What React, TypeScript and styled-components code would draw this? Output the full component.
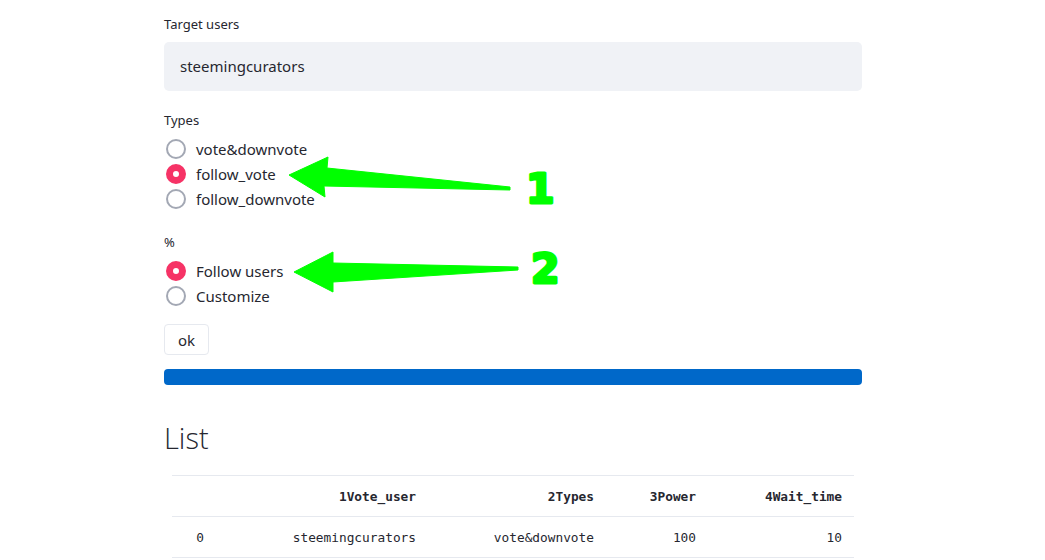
import React from "react";
import styled, { createGlobalStyle } from "styled-components";

const GlobalStyle = createGlobalStyle`
  body {
    margin: 0;
    background: #ffffff;
    font-family: "Noto Sans", "Open Sans", sans-serif;
    color: #262730;
  }
`;

const Page = styled.div`
  position: relative;
  width: 1045px;
  height: 560px;
  overflow: hidden;
`;

const Main = styled.div`
  display: flex;
  flex-direction: column;
  width: 698px;
  margin-left: 164px;
  padding-top: 14px;
`;

const Label = styled.div<{ $top?: number }>`
  font-size: 13px;
  line-height: 20px;
  height: 20px;
  margin-top: ${p => p.$top ?? 0}px;
  margin-bottom: 8px;
`;

const TextInput = styled.div`
  height: 49px;
  background: #f0f2f6;
  border-radius: 5px;
  display: flex;
  align-items: center;
  padding-left: 16px;
  padding-bottom: 2px;
  box-sizing: border-box;
  font-size: 15px;
`;

const RadioGroup = styled.div`
  display: flex;
  flex-direction: column;
  margin-top: -2px;
`;

const RadioRow = styled.label`
  display: flex;
  align-items: center;
  height: 25px;
  padding-left: 2px;
  gap: 10px;
  font-size: 15px;
`;

const RadioCircle = styled.span<{ $on?: boolean }>`
  box-sizing: border-box;
  width: 20px;
  height: 20px;
  border-radius: 50%;
  border: ${p => (p.$on ? "7px solid #f63366" : "2px solid #a3a8b4")};
  background: #ffffff;
`;

const Button = styled.button`
  align-self: flex-start;
  margin-top: 16px;
  height: 31px;
  width: 45px;
  border: 1px solid #e6e9ef;
  border-radius: 4px;
  background: #ffffff;
  font-family: "Noto Sans", "Open Sans", sans-serif;
  font-size: 15px;
  color: #262730;
  padding: 0;
`;

const Progress = styled.div`
  margin-top: 14px;
  height: 16px;
  border-radius: 4px;
  background: #0068c9;
`;

const Heading = styled.h2`
  margin: 33px 0 0 0;
  font-size: 29px;
  line-height: 40px;
  font-weight: 300;
  font-family: "Open Sans", "Noto Sans", sans-serif;
`;

const Table = styled.table`
  margin: 17px 8px 0 8px;
  width: 682px;
  border-collapse: collapse;
  font-family: "DejaVu Sans Mono", "Liberation Mono", monospace;
  font-size: 12.8px;
  color: #262730;

  th, td {
    border-top: 1px solid #e6e9ef;
    border-bottom: 1px solid #e6e9ef;
    height: 40px;
    padding: 0 12px;
    text-align: right;
  }

  th {
    font-weight: bold;
  }

  td.idx {
    text-align: center;
  }
`;

const Overlay = styled.svg`
  position: absolute;
  top: 0;
  left: 0;
`;

const Num = styled.text`
  font-family: "DejaVu Sans", sans-serif;
  font-weight: 900;
  font-size: 41px;
  fill: #00ff00;
  stroke: #00ff00;
  stroke-width: 3px;
  stroke-linejoin: round;
`;

interface Option {
  label: string;
  on?: boolean;
}

const Radios: React.FC<{ options: Array<Option> }> = ({ options }) => (
  <RadioGroup>
    {options.map(o => (
      <RadioRow key={o.label}>
        <RadioCircle $on={o.on} />
        {o.label}
      </RadioRow>
    ))}
  </RadioGroup>
);

const App: React.FC = () => {
  return (
    <Page>
      <GlobalStyle />
      <Main>
        <Label>Target users</Label>
        <TextInput>steemingcurators</TextInput>
        <Label $top={19}>Types</Label>
        <Radios
          options={[
            { label: "vote&downvote" },
            { label: "follow_vote", on: true },
            { label: "follow_downvote" }
          ]}
        />
        <Label $top={21}>%</Label>
        <Radios
          options={[{ label: "Follow users", on: true }, { label: "Customize" }]}
        />
        <Button>ok</Button>
        <Progress />
        <Heading>List</Heading>
        <Table>
          <colgroup>
            <col style={{ width: 56 }} />
            <col style={{ width: 200 }} />
            <col style={{ width: 178 }} />
            <col style={{ width: 102 }} />
            <col style={{ width: 146 }} />
          </colgroup>
          <thead>
            <tr>
              <th></th>
              <th>1Vote_user</th>
              <th>2Types</th>
              <th>3Power</th>
              <th>4Wait_time</th>
            </tr>
          </thead>
          <tbody>
            <tr>
              <td className="idx">0</td>
              <td>steemingcurators</td>
              <td>vote&amp;downvote</td>
              <td>100</td>
              <td>10</td>
            </tr>
          </tbody>
        </Table>
      </Main>
      <Overlay width="1045" height="560" viewBox="0 0 1045 560">
        <polygon
          points="289,175 328,157 327,168 510,187 510,190 324,186 325,197"
          fill="#00ff00"
          stroke="#00ff00"
          strokeWidth="1"
          strokeLinejoin="round"
        />
        <polygon
          points="294,272 333,252 333,263 518,267 518,270 333,282 333,292"
          fill="#00ff00"
          stroke="#00ff00"
          strokeWidth="1"
          strokeLinejoin="round"
        />
        <Num x="526" y="203">1</Num>
        <Num x="531" y="283">2</Num>
      </Overlay>
    </Page>
  );
};

export default App;
